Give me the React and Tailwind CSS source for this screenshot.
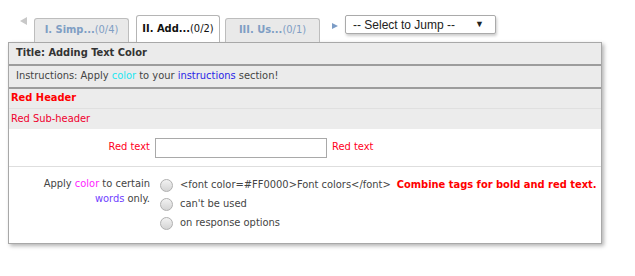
import React from 'react';

const font = { fontFamily: 'Tahoma, "DejaVu Sans Condensed", "DejaVu Sans", sans-serif' };

function Tab({ label, count, active }) {
  if (active) {
    return (
      <div className="flex h-[27px] w-[84px] items-center justify-center rounded-t-[3px] border border-b-0 border-[#b5b5b5] bg-white text-[11px] text-[#111]">
        <span className="font-bold">{label}</span>
        <span>{count}</span>
      </div>
    );
  }
  return (
    <div className="flex h-[24px] w-[95px] items-center justify-center rounded-t-[3px] border border-b-0 border-[#bdbdbd] bg-[#e9e9e9] text-[11px] text-[#7f9ec4]">
      <span className="font-bold">{label}</span>
      <span>{count}</span>
    </div>
  );
}

function Radio({ children }) {
  return (
    <label className="flex h-[19px] items-center gap-[7px] whitespace-nowrap">
      <span className="h-[13px] w-[13px] shrink-0 rounded-full border border-[#b0b0b0] bg-gradient-to-b from-[#f2f2f2] to-[#d4d4d4]" />
      <span>{children}</span>
    </label>
  );
}

export default function App() {
  return (
    <div className="h-[276px] w-[635px] bg-white" style={font}>
      {/* tab strip */}
      <div className="flex h-[42px] items-end pl-[20px]">
        <div className="mb-[17px] mr-[7px] h-0 w-0 border-y-[4px] border-r-[7px] border-y-transparent border-r-[#c8c8c8]" />
        <Tab label="I. Simp..." count="(0/4)" />
        <div className="w-[7px]" />
        <Tab label="II. Add..." count="(0/2)" active />
        <div className="w-[5px]" />
        <Tab label="III. Us..." count="(0/1)" />
        <div className="mb-[13px] ml-[12px] mr-[7px] h-0 w-0 border-y-[3px] border-l-[6px] border-y-transparent border-l-[#7c9cc6]" />
        <div className="mb-[8px] flex h-[19px] w-[151px] items-center justify-between self-end rounded-[2px] border border-[#aaa] bg-white pl-[7px] pr-[11px] text-[12px] text-[#222] shadow-[1px_2px_3px_rgba(0,0,0,0.2)]" style={{ fontFamily: '"Liberation Sans", Arial, sans-serif' }}>
          <span>-- Select to Jump --</span>
          <span className="text-[9px]">▼</span>
        </div>
      </div>

      {/* panel */}
      <div className="ml-[8px] w-[594px] border border-[#a8a8a8] bg-white text-[11px] text-[#444] shadow-[2px_2px_4px_rgba(0,0,0,0.3)]">
        <div className="flex h-[23px] items-center border-b-2 border-[#9c9c9c] bg-[#ebebeb] pl-[7px] font-bold text-[#333]">
          Title: Adding Text Color
        </div>
        <div className="flex h-[23px] items-center border-b-2 border-[#9c9c9c] bg-[#ebebeb] pl-[7px]">
          Instructions: Apply&nbsp;<span className="text-[#22e6f0]">color</span>&nbsp;to your&nbsp;
          <span className="text-[#2a1fe6]">instructions</span>&nbsp;section!
        </div>
        <div className="flex h-[20px] items-center border-b border-[#e0e0e0] bg-[#ececec] pl-[2px] font-bold text-[#ff0000]">
          Red Header
        </div>
        <div className="flex h-[20px] items-center bg-[#ececec] pl-[2px] text-[#f0002e]">
          Red Sub-header
        </div>

        <div className="flex h-[38px] items-center border-b border-[#dedede]">
          <div className="w-[142px] shrink-0 pr-[1px] text-right text-[#ff0022]">Red text</div>
          <div className="ml-[4px] h-[20px] w-[172px] border border-[#a9a9a9] bg-white" />
          <div className="ml-[5px] text-[#ff0022]">Red text</div>
        </div>

        <div className="flex pb-[10px] pt-[9px]">
          <div className="w-[142px] shrink-0 pr-[1px] text-right leading-[15px]">
            Apply <span className="text-[#ff22ff]">color</span> to certain
            <br />
            <span className="text-[#7040ff]">words</span> only.
          </div>
          <div className="ml-[9px] flex flex-col">
            <div className="flex items-center whitespace-nowrap">
              <Radio>&lt;font color=#FF0000&gt;Font colors&lt;/font&gt;</Radio>
              <span className="ml-[6px] font-bold text-[#ff0000]">Combine tags for bold and red text.</span>
            </div>
            <Radio>can't be used</Radio>
            <Radio>on response options</Radio>
          </div>
        </div>
      </div>
    </div>
  );
}
